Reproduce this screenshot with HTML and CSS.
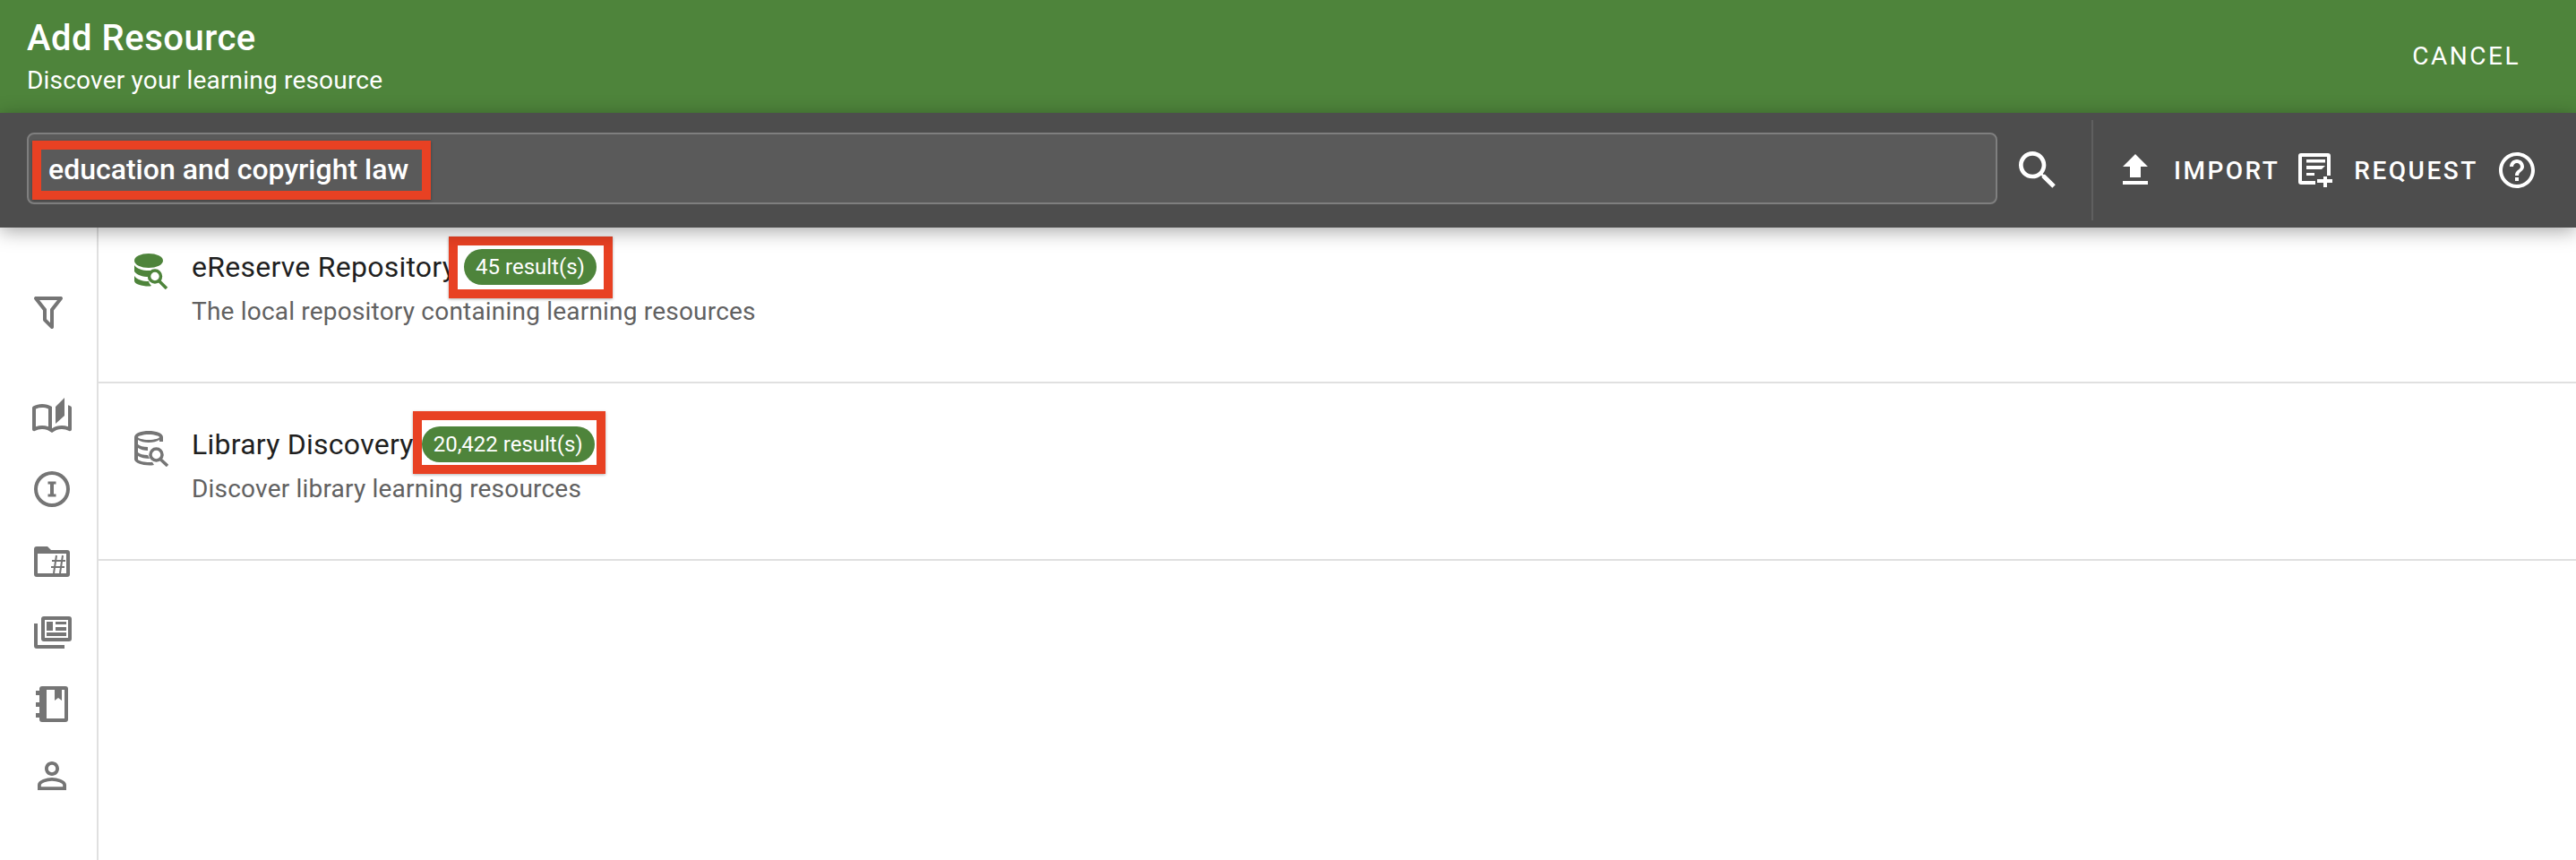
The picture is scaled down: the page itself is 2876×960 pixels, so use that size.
FILE: index.html
```html
<!DOCTYPE html>
<html lang="en">
<head>
  <meta charset="UTF-8" />
  <title>Add Resource</title>
  <link rel="stylesheet" href="styles.css">
</head>
<body>
  <header class="title-bar">
    <div>
      <h1>Add Resource</h1>
      <p>Discover your learning resource</p>
    </div>
    <button class="cancel-btn">CANCEL</button>
  </header>

  <div class="search-bar">
    <div class="search-input">
      <span class="search-text">education and copyright law<span class="mark mark-search"></span></span>
    </div>
    <svg class="icon-search" viewBox="0 0 24 24"><path d="M15.5 14h-.79l-.28-.27C15.41 12.59 16 11.11 16 9.5 16 5.91 13.09 3 9.5 3S3 5.91 3 9.5 5.91 16 9.5 16c1.61 0 3.09-.59 4.23-1.57l.27.28v.79l5 4.99L20.49 19l-4.99-5zm-6 0C7.01 14 5 11.99 5 9.5S7.01 5 9.5 5 14 7.01 14 9.5 11.99 14 9.5 14z"/></svg>
    <div class="divider"></div>
    <svg class="icon-upload" viewBox="0 0 24 24"><path d="M9 16h6v-6h4l-7-7-7 7h4zm-4 2h14v2H5z"/></svg>
    <span class="action import">IMPORT</span>
    <svg class="icon-request" viewBox="0 0 40 40"><path d="M3 1h30a3 3 0 0 1 3 3v22h-4V5H4v27h15v4H3a3 3 0 0 1-3-3V4a3 3 0 0 1 3-3z"/><path d="M9 8h21v3.500H9zM9 15h21l-4 4H9zM9 23h9v3H9z"/><path d="M28 27h4v3h6v4h-6v5h-4v-5h-7v-4h7z"/></svg>
    <span class="action request">REQUEST</span>
    <svg class="icon-help" viewBox="0 0 24 24"><path d="M11 18h2v-2h-2v2zm1-16C6.48 2 2 6.48 2 12s4.48 10 10 10 10-4.48 10-10S17.52 2 12 2zm0 18c-4.41 0-8-3.59-8-8s3.59-8 8-8 8 3.59 8 8-3.59 8-8 8zm0-14c-2.21 0-4 1.79-4 4h2c0-1.1.9-2 2-2s2 .9 2 2c0 2-3 1.75-3 5h2c0-2.25 3-2.5 3-5 0-2.21-1.79-4-4-4z"/></svg>
  </div>

  <div class="content">
    <nav class="side-nav">
      <svg class="nav-filter" viewBox="0 0 24 24"><path d="M15,19.88C15.04,20.18 14.94,20.5 14.71,20.71C14.32,21.1 13.69,21.1 13.3,20.71L9.29,16.7C9.06,16.47 8.96,16.16 9,15.87V10.75L4.21,4.62C3.87,4.19 3.95,3.56 4.38,3.22C4.57,3.08 4.78,3 5,3V3H19V3C19.22,3 19.43,3.08 19.62,3.22C20.05,3.56 20.13,4.19 19.79,4.62L15,10.75V19.88M7.04,5L11,10.06V15.58L13,17.58V10.05L16.96,5H7.04Z"/></svg>
      <svg class="nav-book" viewBox="0 0 24 24"><path d="M22.47 5.2C22 4.96 21.51 4.76 21 4.59v12.03C19.86 16.21 18.69 16 17.5 16c-1.9 0-3.78.54-5.5 1.58V5.48C10.38 4.55 8.51 4 6.5 4c-1.79 0-3.48.44-4.97 1.2-.33.16-.53.51-.53.88v12.08c0 .76.81 1.23 1.48.87C3.69 18.4 5.05 18 6.5 18c2.07 0 3.98.82 5.5 2 1.52-1.18 3.43-2 5.5-2 1.45 0 2.81.4 4.02 1.04.67.36 1.48-.11 1.48-.87V6.08c0-.37-.2-.72-.53-.88zM10 16.62C8.86 16.21 7.69 16 6.5 16c-1.19 0-2.36.21-3.5.62V6.71C4.11 6.24 5.28 6 6.5 6c1.2 0 2.39.25 3.5.72v9.9zM19 .5l-5 5V15l5-4.5V.5z"/></svg>
      <svg class="nav-info" viewBox="0 0 40 40"><path fill-rule="evenodd" d="M20 0a20 20 0 1 0 0 40a20 20 0 1 0 0-40zM20 4a16 16 0 1 1 0 32a16 16 0 1 1 0-32z"/><path d="M15.500 11.500h9v3h-2.500v11h2.500v3h-9v-3H18v-11h-2.500z"/></svg>
      <svg class="nav-folder" viewBox="0 0 40 34"><path fill-rule="evenodd" d="M3 0h12l4 4h18a3 3 0 0 1 3 3v24a3 3 0 0 1-3 3H3a3 3 0 0 1-3-3V3a3 3 0 0 1 3-3zM4 8v22h32V8z"/><path class="hash" d="M25 10l-3 20M32 10l-3 20M20 16h15M19 23h15"/></svg>
      <svg class="nav-news" viewBox="0 0 42 36"><path d="M0 8h4v24h30v4H3a3 3 0 0 1-3-3z"/><path fill-rule="evenodd" d="M11 0h28a3 3 0 0 1 3 3v22a3 3 0 0 1-3 3H11a3 3 0 0 1-3-3V3a3 3 0 0 1 3-3zM12 4v20h26V4z"/><path d="M14 6h7v10h-7zM24 6h12v3H24zM24 12h12v4H24zM14 18h22v4H14z"/></svg>
      <svg class="nav-notebook" viewBox="0 0 36 40"><path fill-rule="evenodd" d="M7 0h26a3 3 0 0 1 3 3v34a3 3 0 0 1-3 3H7a3 3 0 0 1-3-3V3a3 3 0 0 1 3-3zM12 4v32h20V4h-3v12l-4-3-4 3V4z"/><path d="M0 5h8v5H0zM0 18h8v5H0zM0 30h8v5H0z"/></svg>
      <svg class="nav-person" viewBox="0 0 24 24"><path d="M12 5.900c1.160 0 2.100.94 2.100 2.100s-.94 2.100-2.100 2.100S9.900 9.160 9.900 8s.94-2.100 2.100-2.100m0 9c2.970 0 6.100 1.460 6.100 2.100v1.100H5.900V17c0-.64 3.130-2.100 6.100-2.100M12 4C9.790 4 8 5.790 8 8s1.790 4 4 4 4-1.790 4-4-1.790-4-4-4zm0 9c-2.670 0-8 1.340-8 4v3h16v-3c0-2.660-5.330-4-8-4z"/></svg>
    </nav>

    <main class="results">
      <div class="result-list">
        <div class="result-row">
          <svg class="db-icon db-green" viewBox="0 0 38 40"><ellipse cx="16" cy="8" rx="16" ry="8"/><path d="M0 13c3 4 9 6 16 6 2 0 3 0 5-.5-3 2-4.500 4.500-5 7.500-7 0-13-2-16-6zM0 25c3 4 9 6 16 6 .5 2 1.500 3.500 3 5-1 .5-2 .5-3 .5-8 0-16-2.500-16-6z"/><circle class="db-lens" cx="23" cy="25.500" r="6.500"/><line class="db-lens" x1="28" y1="31" x2="36" y2="39"/></svg>
          <div class="result-text">
            <div class="result-title">eReserve Repository<span class="badge">45 result(s)<span class="mark mark-a"></span></span></div>
            <p>The local repository containing learning resources</p>
          </div>
        </div>
        <div class="result-row">
          <svg class="db-icon db-grey" viewBox="0 0 38 40"><path fill-rule="evenodd" d="M16 0c8 0 16 2.500 16 7v5h-4v-2c-3 2-7 3-12 3S7 12 4 10v5c2 2 6 3 11 3v4c-4 0-8-1-11-3v5c2 2 6 3 11 3l2 4c-5 0-10-1-13-3v4c2 2 7 3 13 3 1 0 2 0 3-.2l2 3.200c-2 .5-3 .5-5 .5-9 0-17-3-17-7V7C0 2.500 8 0 16 0zM16 4C9 4 4 6 4 7s5 3 12 3 12-2 12-3-5-3-12-3z"/><circle class="db-lens" cx="24.500" cy="26.500" r="6.500"/><line class="db-lens" x1="29.500" y1="32" x2="37" y2="39"/></svg>
          <div class="result-text">
            <div class="result-title">Library Discovery<span class="badge">20,422 result(s)<span class="mark mark-b"></span></span></div>
            <p>Discover library learning resources</p>
          </div>
        </div>
      </div>
    </main>
  </div>
</body>
</html>
```

FILE: styles.css
```css
* {
  box-sizing: border-box;
}
html, body {
  height: 100%;
}
body {
  margin: 0;
  font-family: Roboto, "Liberation Sans", sans-serif;
  background-color: white;
  color: #1f1f1f;
  overflow: hidden;
  display: flex;
  flex-direction: column;
}
.title-bar {
  height: 126px;
  flex-shrink: 0;
  background-color: #4e843b;
  color: white;
  padding: 22px 62px 0 30px;
  display: flex;
  justify-content: space-between;
}
.title-bar h1 {
  margin: 0;
  font-size: 40px;
  line-height: 42px;
  font-weight: 500;
  letter-spacing: 0.5px;
}
.title-bar p {
  margin: 10px 0 0;
  font-size: 28px;
  line-height: 32px;
  letter-spacing: 0.2px;
}
.cancel-btn {
  height: 36px;
  margin-top: 22px;
  padding: 0;
  border: none;
  background: none;
  color: white;
  font-family: inherit;
  font-size: 28px;
  letter-spacing: 2.5px;
}
.search-bar {
  height: 128px;
  flex-shrink: 0;
  background-color: #4d4d4d;
  color: white;
  padding: 0 0 0 30px;
  display: flex;
  align-items: center;
  position: relative;
  z-index: 2;
  box-shadow: 0 4px 20px rgba(0,0,0,0.35);
}
.search-input {
  width: 2200px;
  height: 80px;
  margin-top: -4px;
  padding-left: 22px;
  border: 2px solid #7f7f7f;
  border-radius: 8px;
  background-color: #5a5a5a;
  display: flex;
  align-items: center;
}
.search-text {
  position: relative;
  top: 1px;
  font-size: 32px;
  line-height: 38px;
  font-weight: 500;
}
.mark {
  position: absolute;
  border: 10px solid #e84123;
  box-shadow: 0 1px 3px rgba(0,0,0,0.3);
  pointer-events: none;
}
.mark-search {
  top: -13px;
  bottom: -15px;
  left: -18px;
  right: -25px;
}
.mark-a {
  top: -14px;
  bottom: -15px;
  left: -17px;
  right: -18px;
}
.mark-b {
  top: -17px;
  bottom: -13px;
  left: -10px;
  right: -12px;
}
.icon-search, .icon-upload, .icon-request, .icon-help {
  fill: white;
  flex-shrink: 0;
}
.icon-search {
  width: 56px;
  height: 56px;
  margin-left: 17px;
}
.divider {
  width: 2px;
  height: 112px;
  margin-left: 32px;
  background-color: #5f5f5f;
}
.icon-upload {
  width: 48px;
  height: 48px;
  margin-left: 23px;
}
.action {
  font-size: 28px;
  letter-spacing: 2.5px;
  font-weight: 500;
}
.import {
  margin-left: 19px;
}
.icon-request {
  width: 40px;
  height: 40px;
  margin-left: 21px;
}
.request {
  margin-left: 22px;
}
.icon-help {
  width: 48px;
  height: 48px;
  margin-left: 19px;
}
.content {
  flex: 1;
  display: flex;
  min-height: 0;
}
.side-nav {
  width: 110px;
  flex-shrink: 0;
  border-right: 2px solid #e0e0e0;
  display: flex;
  flex-direction: column;
  fill: #757575;
}
.nav-filter {
  width: 48px;
  height: 48px;
  margin: 71px 0 0 30px;
}
.nav-book {
  width: 48px;
  height: 48px;
  margin: 70px 0 0 34px;
}
.nav-info {
  width: 40px;
  height: 40px;
  margin: 35px 0 0 38px;
}
.nav-folder {
  width: 40px;
  height: 34px;
  margin: 44px 0 0 38px;
}
.hash {
  fill: none;
  stroke: #757575;
  stroke-width: 2;
}
.nav-news {
  width: 42px;
  height: 36px;
  margin: 44px 0 0 38px;
}
.nav-notebook {
  width: 36px;
  height: 40px;
  margin: 42px 0 0 40px;
}
.nav-person {
  width: 48px;
  height: 48px;
  margin: 36px 0 0 34px;
}
.results {
  flex: 1;
  overflow: hidden;
}
.result-list {
  margin-top: -24px;
}
.result-row {
  height: 198px;
  padding: 53px 0 0 40px;
  border-bottom: 2px solid #e0e0e0;
  display: flex;
}
.db-icon {
  width: 38px;
  height: 40px;
  flex-shrink: 0;
}
.db-green {
  fill: #4e843b;
}
.db-grey {
  fill: #757575;
}
.db-lens {
  fill: white;
  stroke-width: 3.5;
}
.db-green .db-lens {
  stroke: #4e843b;
}
.db-grey .db-lens {
  stroke: #757575;
}
.result-text {
  margin-left: 26px;
}
.result-title {
  display: flex;
  align-items: center;
  gap: 9px;
  height: 40px;
  margin-top: -5px;
  font-size: 32px;
  letter-spacing: 0.25px;
  white-space: pre;
}
.result-text p {
  margin: 14px 0 0;
  font-size: 28px;
  line-height: 32px;
  letter-spacing: 0.2px;
  color: #616161;
}
.badge {
  position: relative;
  height: 40px;
  padding: 0 13px;
  border-radius: 20px;
  background-color: #4e843b;
  color: white;
  font-size: 24px;
  letter-spacing: 0;
  line-height: 40px;
}
```
